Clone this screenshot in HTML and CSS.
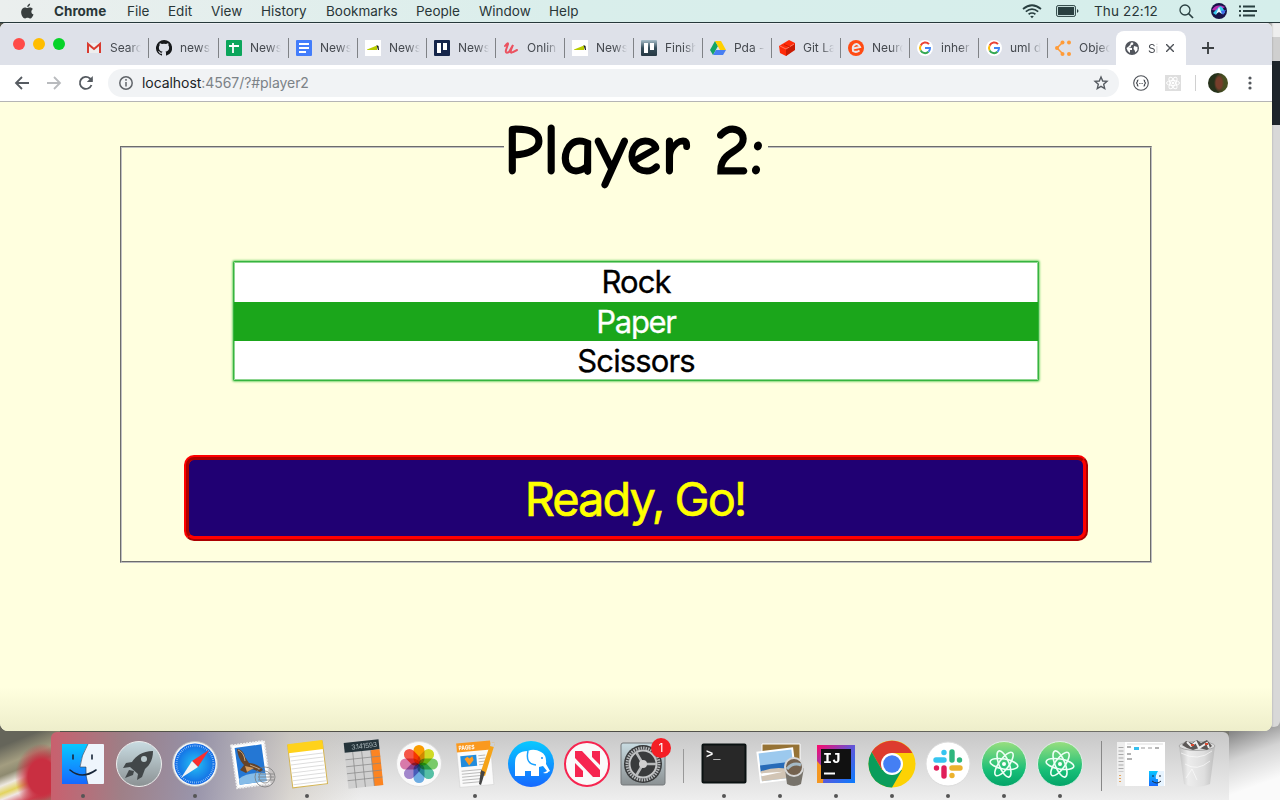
FILE: index.html
```
<!DOCTYPE html>
<html lang="en">
<head>
<meta charset="utf-8">
<title>Player 2</title>
<link rel="stylesheet" href="styles.css">
</head>
<body>
<div class="desktop">
<header class="menubar">
  <nav class="menus">
    <svg class="apple" viewBox="0 0 14 17"><path d="M9.800 0C9.900 2 8.400 3.700 6.700 3.700 6.600 2 8.100.3 9.800 0zM12.900 5.800C10.300 7.600 10.700 10.500 13.500 11.800 12.500 14.500 11.200 16.200 9.700 16 8.500 15.700 8.100 15.300 7 15.300S5.400 15.900 4.400 16C2.100 16-.2 11.700.2 8.500.6 4.600 3.700 3.600 5.500 4.400 6.900 4.900 7.200 4.800 8.500 4.300 10.200 3.700 12 4.400 12.900 5.800z"/></svg>
    <b class="m-chrome">Chrome</b><span class="m-file">File</span><span class="m-edit">Edit</span><span class="m-view">View</span><span class="m-history">History</span><span class="m-bookmarks">Bookmarks</span><span class="m-people">People</span><span class="m-window">Window</span><span>Help</span>
  </nav>
  <div class="status">
    <svg class="wifi" viewBox="0 0 20 15" fill="none" stroke="#293f40" stroke-width="1.700"><path d="M1 5Q10-2.500 19 5M3.800 7.700Q10 2.700 16.200 7.700M6.600 10.300Q10 7.700 13.400 10.300"/><path d="M8.200 12.300Q10 11 11.800 12.300L10 14.300z" fill="#293f40" stroke="none"/></svg>
    <svg class="battery" viewBox="0 0 23 12"><rect x=".6" y=".6" width="18.800" height="10.800" rx="1.500" fill="none" stroke="#293f40"/><rect x="2" y="2" width="16" height="8" fill="#293f40"/><path d="M21 4Q24 6 21 8z" fill="#293f40"/></svg>
    <time>Thu 22:12</time>
    <svg class="search" viewBox="0 0 15 15" fill="none" stroke="#293f40" stroke-width="1.300"><circle cx="6" cy="6" r="5"/><path d="M9.500 9.500L14 14" stroke-width="1.700"/></svg>
    <svg class="siri" viewBox="0 0 16 16"><circle cx="8" cy="8" r="8" fill="#171348"/><path d="M1 7Q5 0 14 4L8 8z" fill="#b52bb2"/><path d="M2 10Q5 7 8 4T14 10L11 11 8 7 5 12z" fill="#36c9ed"/><path d="M8 4L11 11 8 9 5 11z" fill="#e9f5ff"/><path d="M10 8L15 7 12 12z" fill="#4668e9"/></svg>
    <svg class="list" viewBox="0 0 18 12" stroke="#293f40" stroke-width="1.800"><path d="M0 1.500h2M4 1.500h12M0 6h2M4 6h14M0 10.500h2M4 10.500h12"/></svg>
  </div>
</header>
<main class="browser">
  <div class="tabstrip">
    <div class="lights"><i></i><i></i><i></i></div>
    <div class="tabs">
      <div class="tab wide"><svg viewBox="0 0 16 16"><path d="M2 3h12v10H2z" fill="#eee"/><path d="M2 13V4l6 5 6-5v9" fill="none" stroke="#d93b30" stroke-width="2"/></svg><span>Searc</span></div>
      <div class="tab wide"><svg viewBox="0 0 16 16"><path fill="#17191c" d="M8 0a8 8 0 0 0-2.500 15.600c.4.100.5-.2.500-.4v-1.500c-2.200.5-2.700-1-2.700-1-.4-.9-.9-1.200-.9-1.200-.7-.5.100-.5.100-.5.800.1 1.200.8 1.200.8.700 1.300 1.900.9 2.300.7.100-.5.300-.9.500-1.100-1.800-.2-3.600-.9-3.600-4 0-.9.300-1.600.8-2.100-.1-.2-.4-1 .1-2.100 0 0 .7-.2 2.200.8a8 8 0 0 1 4 0c1.500-1 2.200-.8 2.200-.8.500 1.100.2 1.900.1 2.100.5.500.8 1.200.8 2.100 0 3.100-1.800 3.800-3.600 4 .3.300.5.700.5 1.500v2.300c0 .2.200.5.600.4A8 8 0 0 0 8 0z"/></svg><span>news-</span></div>
      <div class="tab wide"><svg viewBox="0 0 16 16"><rect width="16" height="16" rx="1" fill="#0ca65c"/><path d="M3 6h10M7 3v10" stroke="#fff" stroke-width="1.800"/></svg><span>News</span></div>
      <div class="tab"><svg viewBox="0 0 16 16"><rect width="16" height="16" rx="1" fill="#437dfb"/><path d="M3 4h10M3 8h10M3 12h7" stroke="#fff" stroke-width="1.800"/></svg><span>News</span></div>
      <div class="tab"><svg viewBox="0 0 16 16"><path fill="#fff" d="M0 0h16v16H0z"/><path d="M2 9.500L12 5.500v4.500H2z" fill="#b9cc00"/><path d="M11.500 5l2 1 .5 4h-1z" fill="#161c16"/></svg><span>News</span></div>
      <div class="tab"><svg viewBox="0 0 16 16"><rect width="16" height="16" rx="1" fill="#15254a"/><path d="M3 3h4v10H3zM9 3h4v7H9z" fill="#fff"/></svg><span>News</span></div>
      <div class="tab"><svg viewBox="0 0 16 16" fill="none" stroke="#eb5260" stroke-width="2" stroke-linecap="round"><path d="M2 6Q5 2 5 4L3 10Q2 14 6 12L10 5 8 10Q7 14 10 12L14 10"/></svg><span>Onlin</span></div>
      <div class="tab"><svg viewBox="0 0 16 16"><path fill="#fff" d="M0 0h16v16H0z"/><path d="M2 9.500L12 5.500v4.500H2z" fill="#b9cc00"/><path d="M11.500 5l2 1 .5 4h-1z" fill="#161c16"/></svg><span>News</span></div>
      <div class="tab"><svg viewBox="0 0 16 16"><defs><linearGradient id="board" x2="0" y2="1"><stop stop-color="#a9bfcb"/><stop offset=".5" stop-color="#354d5a"/><stop offset="1" stop-color="#263843"/></linearGradient></defs><rect width="16" height="16" rx="1" fill="url(#board)"/><path d="M3 3h4v10H3zM9 3h4v7H9z" fill="#fff"/></svg><span>Finish</span></div>
      <div class="tab"><svg viewBox="0 0 16 16"><path d="M5 1L0 10l3 5L8 6z" fill="#13a464"/><path d="M5 1h6l5 9h-6z" fill="#ffd000"/><path d="M6 10h10l-3 5H3z" fill="#477ff2"/></svg><span>Pda -</span></div>
      <div class="tab"><svg viewBox="0 0 16 16"><path d="M0 6L10 0l6 3v6L7 16 1 13z" fill="#ff2b09"/><path d="M7 9l9-5v6l-9 6z" fill="#c91b03"/><path d="M1 6l6 3 8-5" fill="none" stroke="#ff8d76" stroke-width=".8"/><path d="M5 4.500l6 2.500" fill="none" stroke="#c91b03"/></svg><span>Git La</span></div>
      <div class="tab"><svg viewBox="0 0 16 16"><circle cx="8" cy="8" r="8" fill="#ff4b13"/><path d="M5 8.500L12 7Q10 3 7 4.500T5 11Q8 13 11.500 10.500" fill="none" stroke="#e9e6ea" stroke-width="2"/></svg><span>Neuro</span></div>
      <div class="tab"><svg viewBox="0 0 16 16"><circle cx="8" cy="8" r="8" fill="#fff"/><g fill="none" stroke-width="2"><path d="M12 4.200A5 5 0 0 0 3.700 5.500" stroke="#ea4335"/><path d="M3.700 5.500a5 5 0 0 0 0 5" stroke="#fbbc05"/><path d="M3.700 10.500a5 5 0 0 0 7.800 1.300" stroke="#34a853"/><path d="M11.500 11.800A5 5 0 0 0 13 8H8" stroke="#4285f4"/></g></svg><span>inher</span></div>
      <div class="tab"><svg viewBox="0 0 16 16"><circle cx="8" cy="8" r="8" fill="#fff"/><g fill="none" stroke-width="2"><path d="M12 4.200A5 5 0 0 0 3.700 5.500" stroke="#ea4335"/><path d="M3.700 5.500a5 5 0 0 0 0 5" stroke="#fbbc05"/><path d="M3.700 10.500a5 5 0 0 0 7.800 1.300" stroke="#34a853"/><path d="M11.500 11.800A5 5 0 0 0 13 8H8" stroke="#4285f4"/></g></svg><span>uml d</span></div>
      <div class="tab last"><svg viewBox="0 0 16 16" fill="#ff9b38"><path d="M7 3L2 8l5 5" fill="none" stroke="#ff9b38" stroke-width="1.500"/><circle cx="7.500" cy="2.500" r="2"/><circle cx="2" cy="8" r="2"/><circle cx="7.500" cy="14" r="2"/><circle cx="14" cy="2.500" r="2"/><circle cx="14" cy="14" r="2"/></svg><span>Objec</span></div>
    </div>
    <div class="tab active"><svg viewBox="0 0 16 16"><circle cx="8" cy="8" r="7" fill="#51555c"/><path d="M7 2.500h2q1 2-1 2.500T7 7L4.500 7.500 8 8 8 10 6 10 6 13Q3 11 2.500 8L4 7Q5 6 6 5zM10 6l3.500 1v3l-2 2.500-1-2.500-1-1z" fill="#fff"/></svg><span>Si</span><svg class="close" viewBox="0 0 8 8"><path d="M0 0l8 8M8 0L0 8" stroke="#4d5157" stroke-width="1.400"/></svg></div>
    <svg class="plus" viewBox="0 0 12 12"><path d="M6 0v12M0 6h12" stroke="#3c4043" stroke-width="1.900"/></svg>
  </div>
  <div class="toolbar">
    <svg class="nav-icon" viewBox="0 0 16 16" fill="none" stroke="#565b61" stroke-width="1.800"><path d="M15 8H2M8 2L2 8l6 6"/></svg>
    <svg class="nav-icon" viewBox="0 0 16 16" fill="none" stroke="#b9bbbe" stroke-width="1.800"><path d="M1 8h13M8 2l6 6-6 6"/></svg>
    <svg class="nav-icon" viewBox="0 0 16 16"><path d="M13.500 10A6 6 0 1 1 12 3.500L14 5.500" fill="none" stroke="#565b61" stroke-width="1.800"/><path d="M14.800 1v6H8.800z" fill="#565b61"/></svg>
    <div class="address">
      <svg class="info" viewBox="0 0 16 16" fill="none" stroke="#606469" stroke-width="1.500"><circle cx="8" cy="8" r="6.200"/><path d="M8 7v4.500M8 4v1.700"/></svg>
      <span class="url"><span class="host">localhost</span>:4567/?#player2</span>
      <svg class="star" viewBox="0 0 16 16"><path d="M8 2l1.700 4 4.300.4-3.300 2.900 1 4.200L8 11.300l-3.700 2.200 1-4.200L2 6.400 6.300 6z" fill="none" stroke="#565b61" stroke-width="1.400"/></svg>
    </div>
    <svg class="ext" viewBox="0 0 16 16" fill="none" stroke="#4d5157" stroke-width="1.100"><circle cx="8" cy="8" r="7.300"/><path d="M5.500 5Q4 5 4.500 6.500L3.500 8l1 1.500Q4 11 5.500 11M10.500 5q1.500 0 1 1.500l1 1.500-1 1.500q.5 1.500-1 1.500" stroke-width="1.200"/><path d="M6.300 8.500h3.600" stroke-dasharray=".8 .5"/></svg>
    <svg class="ext react" viewBox="0 0 16 16"><path fill="#dedede" d="M0 0h16v16H0z"/><g fill="none" stroke="#fff"><ellipse cx="8" cy="8" rx="6.500" ry="2.500"/><ellipse cx="8" cy="8" rx="6.500" ry="2.500" transform="rotate(60 8 8)"/><ellipse cx="8" cy="8" rx="6.500" ry="2.500" transform="rotate(120 8 8)"/></g><circle cx="8" cy="8" r="1.300" fill="#fff"/></svg>
    <i class="rule"></i>
    <i class="avatar"></i>
    <svg class="more" viewBox="0 0 4 14" fill="#53575c"><circle cx="2" cy="2" r="1.600"/><circle cx="2" cy="7" r="1.600"/><circle cx="2" cy="12" r="1.600"/></svg>
  </div>
  <section class="page">
    <fieldset class="game">
      <legend>Player 2:</legend>
      <div class="choices" role="listbox"><div>Rock</div><div class="selected">Paper</div><div>Scissors</div></div>
      <button class="go">Ready, Go!</button>
    </fieldset>
  </section>
</main>
<aside class="behind"></aside>
<footer class="dock">
  <svg class="defs" width="0" height="0"><defs>
    <linearGradient id="blue" x2="0" y2="1"><stop stop-color="#08c9ff"/><stop offset="1" stop-color="#1668ff"/></linearGradient>
    <linearGradient id="metal" x2="0" y2="1"><stop stop-color="#c9dce2"/><stop offset="1" stop-color="#8b9193"/></linearGradient>
    <linearGradient id="green" x2="0" y2="1"><stop stop-color="#99df7f"/><stop offset=".65" stop-color="#17be77"/><stop offset="1" stop-color="#03a368"/></linearGradient>
    <radialGradient id="safari"><stop stop-color="#25c3f4"/><stop offset="1" stop-color="#1268e4"/></radialGradient>
    <linearGradient id="idea" x2="1" y2="1"><stop stop-color="#ff096a"/><stop offset=".5" stop-color="#6056d8"/><stop offset="1" stop-color="#087cff"/></linearGradient>
    <linearGradient id="bin" x2="1"><stop stop-color="#bbb"/><stop offset=".25" stop-color="#eee"/><stop offset=".7" stop-color="#dedede"/><stop offset="1" stop-color="#b9b9b9"/></linearGradient>
  </defs></svg>
  <div class="app open"><svg viewBox="0 0 56 60"><rect x="7" y="8" width="42" height="40" rx="1" fill="#eef5fc"/><path d="M7 8h26Q26 20 25 31h6Q31 42 33 48H7z" fill="url(#blue)"/><path d="M33 8Q26 20 25 31h6Q30 40 33 48" fill="none" stroke="#2b3d50" stroke-width=".6"/><path d="M18 19v4M37 19v4M15 34Q27 44 41 34" fill="none" stroke="#172638" stroke-width="1.600" stroke-linecap="round"/></svg></div>
  <div class="app"><svg viewBox="0 0 56 60"><circle cx="28" cy="28" r="22.500" fill="url(#metal)" stroke="#eee"/><path d="M42 15C31 15 25 20 21 26L15 27 12 32 19 31 27 38 26 44 31 41 34 33C40 28 42 22 42 15zM18 34L14 42 22 39 23 35z" fill="#424749"/><circle cx="33" cy="23" r="3" fill="#b9c8cc"/></svg></div>
  <div class="app open"><svg viewBox="0 0 56 60"><circle cx="28" cy="28" r="22.500" fill="#f7f7f7" stroke="#bbb"/><circle cx="28" cy="28" r="20.500" fill="url(#safari)"/><circle cx="28" cy="28" r="18.500" fill="none" stroke="#b6ddff" stroke-width="2" stroke-dasharray=".6 1.340"/><path d="M42 14L31 31 25 25z" fill="#fa2e2f"/><path d="M14 42L25 25 31 31z" fill="#f4f4f4"/></svg></div>
  <div class="app"><svg viewBox="0 0 56 60"><g transform="rotate(-8 28 28)"><rect x="11" y="7" width="33" height="43" fill="#fff" stroke="#eee" stroke-width="2" stroke-dasharray="2 1"/><rect x="14" y="10" width="27" height="37" fill="#2477d4"/><path d="M14 41Q24 35 41 39v8H14z" fill="#86bce8"/></g><path d="M14 13Q20 13 22 21L26 27Q36 28 40 34L37 36 29 33 23 37 17 34 21 29Q15 23 14 13z" fill="#654328"/><path d="M15 14Q21 16 22 25M27 29l10 4" fill="none" stroke="#c8a67e"/><path d="M22 30l9 2-7 4z" fill="#d59b5c"/><g fill="none" stroke="#777" opacity=".75"><circle cx="42" cy="41" r="10"/><circle cx="42" cy="41" r="6"/><path d="M35 38h16M35 41h16M35 44h16"/></g></svg></div>
  <div class="app open"><svg viewBox="0 0 56 60"><g transform="rotate(-7 28 28)"><path d="M11 7h35v43H11z" fill="#fff" stroke="#d4b453"/><path d="M11 6h35v9H11z" fill="#ffd21b"/><path d="M12 19h33M12 23h33M12 27h33M12 31h33M12 35h33M12 39h33M12 43h33M12 47h33" stroke="#ddd"/></g></svg></div>
  <div class="app"><svg viewBox="0 0 56 60"><g transform="rotate(-6 28 28)"><path d="M11 6h35v45H11z" fill="#d0d0d0"/><path d="M11 5h35v10H11z" fill="#25343a"/><path d="M37 15h9v36h-9z" fill="#fc8421"/><path d="M11 22h35M11 29h35M11 36h35M11 43h35M19 15v36M28 15v36M37 15v36" stroke="#888" stroke-width=".7"/><text x="18" y="12.500" font-size="7" fill="#a5b2b5" textLength="26">3.141593</text></g></svg></div>
  <div class="app"><svg viewBox="0 0 56 60"><circle cx="28" cy="28" r="22.500" fill="#fafafa" stroke="#ddd"/><g class="petals"><rect x="22.500" y="9" width="11" height="19" rx="5.500" fill="#ffa000"/><rect x="22.500" y="9" width="11" height="19" rx="5.500" fill="#d5df25" transform="rotate(45 28 28)"/><rect x="22.500" y="9" width="11" height="19" rx="5.500" fill="#7cce6c" transform="rotate(90 28 28)"/><rect x="22.500" y="9" width="11" height="19" rx="5.500" fill="#58c4a8" transform="rotate(135 28 28)"/><rect x="22.500" y="9" width="11" height="19" rx="5.500" fill="#6fb0e7" transform="rotate(180 28 28)"/><rect x="22.500" y="9" width="11" height="19" rx="5.500" fill="#a58ad0" transform="rotate(225 28 28)"/><rect x="22.500" y="9" width="11" height="19" rx="5.500" fill="#dd7cae" transform="rotate(270 28 28)"/><rect x="22.500" y="9" width="11" height="19" rx="5.500" fill="#fa5849" transform="rotate(315 28 28)"/></g></svg></div>
  <div class="app open"><svg viewBox="0 0 56 60"><g transform="rotate(-5 28 28)"><path d="M11 7h34v43H11z" fill="#fafafa" stroke="#ccc" stroke-width=".5"/><path d="M11 6h34v9H11z" fill="#fa991e"/><text x="13" y="13" font-size="6" font-weight="bold" fill="#fff" textLength="16" lengthAdjust="spacingAndGlyphs">PAGES</text><path d="M14 19h16v11H14z" fill="#218cdd"/><path d="M18 22l3-2 2 2 3-2 1 4-5 5z" fill="#ff9b20"/><path d="M32 20h7M32 23h7M32 26h7M32 29h5M14 34h22M14 37h21M14 40h21M14 43h20M14 46h17" stroke="#bbb"/></g><path d="M44 6l4 1-10 33-5-2z" fill="#f5a318"/><path d="M34 34l4 2-4 13-2-1z" fill="#444"/><path d="M44 6l4 1-1 4-4-1z" fill="#cdd1d7"/></svg></div>
  <div class="app"><svg viewBox="0 0 56 60"><circle cx="28" cy="28" r="23" fill="url(#blue)"/><path d="M12 40V27Q12 15 25 15Q31 12 38 16Q44 19 43 28L47 35 45 36Q45 38 40 37L44 35 40 30 36 31V40H28V35H22V40z" fill="#fff"/><path d="M25 15Q22 28 33 29" fill="none" stroke="#1aa2ff" stroke-width="1.500"/><circle cx="39" cy="22" r="1" fill="#178ef5"/></svg></div>
  <div class="app"><svg viewBox="0 0 56 60"><circle cx="28" cy="28" r="22" fill="#fafafa" stroke="#f62550" stroke-width="2"/><path d="M16 15h7L41 34v7h-7L16 22zM33 15h8v14l-8-8zM16 27l8 8v6h-8z" fill="#f62550"/></svg></div>
  <div class="app"><svg viewBox="0 0 56 60"><rect x="6" y="7" width="44" height="42" rx="2" fill="url(#metal)" stroke="#74787b"/><circle cx="28" cy="28" r="19" fill="#393b3c"/><circle cx="28" cy="28" r="16" fill="none" stroke="#b4b7b9" stroke-width="3" stroke-dasharray="1.500 1"/><circle cx="28" cy="28" r="13.500" fill="none" stroke="#c3c5c6" stroke-width="2"/><path d="M41 28H28M28 28l-7-12M28 28l-7 12" stroke="#b8babb" stroke-width="2.500"/><circle cx="28" cy="28" r="4" fill="#d0d0d0"/><circle cx="46" cy="12" r="10" fill="#f51e25"/><text x="46" y="16" text-anchor="middle" font-size="12" fill="#fff">1</text></svg></div>
  <i class="divider"></i>
  <div class="app open"><svg viewBox="0 0 56 60"><rect x="6.500" y="8.500" width="43" height="38" rx="1" fill="#282828" stroke="#0b1212" stroke-width="2"/><text class="prompt" x="10" y="22" font-size="12" font-weight="bold" fill="#fff">&gt;_</text></svg></div>
  <div class="app open"><svg viewBox="0 0 56 60"><path d="M10 8h38v34H10z" fill="#967335" stroke="#fff"/><g transform="rotate(-7 28 28)"><path d="M6 13h37v32H6z" fill="#fff"/><path d="M8 15h33v28H8z" fill="#9cc9ee"/><path d="M8 27h33v7H8z" fill="#276bb8"/><path d="M8 33Q25 29 41 36v7H8z" fill="#d2c5b5"/><path d="M8 35l22 1-22 2z" fill="#fff"/></g><path d="M33 33l2 15q7 4 14 0l3-16z" fill="#77736b"/><circle cx="42" cy="31" r="9" fill="#74624f" stroke="#d7d7d7" stroke-width="2"/><path d="M35 33q6-7 14-4" stroke="#a5bac7" stroke-width="3" fill="none"/></svg></div>
  <div class="app open"><svg viewBox="0 0 56 60"><path d="M9 9h38v38H9z" fill="url(#idea)"/><path d="M9 25l7 8-1 14H9z" fill="#f49722"/><path d="M13 13h30v30H13z" fill="#111"/><text class="ij" x="15" y="27" font-size="15" font-weight="bold" fill="#fff">IJ</text><path d="M16 37.500h11" stroke="#fff" stroke-width="2"/></svg></div>
  <div class="app open"><svg viewBox="0 0 56 60"><circle cx="28" cy="28" r="23.500" fill="#fdd204"/><path d="M7.700 16A23.500 23.500 0 0 1 48.300 17H28L18 34z" fill="#dd3b2e"/><path d="M7.700 16A23.500 23.500 0 0 0 28 51.500L38 34 18 34z" fill="#0b9d5b"/><circle cx="28" cy="28" r="11" fill="#fff"/><circle cx="28" cy="28" r="8.800" fill="#447ff4"/></svg></div>
  <div class="app open"><svg viewBox="0 0 56 60"><circle cx="28" cy="28" r="22" fill="#fff" stroke="#ddd"/><g fill="none" stroke-width="5.400" stroke-linecap="round"><path d="M16 24h8M24 16.500v.1" stroke="#36c5f0"/><path d="M32 16v8M39.500 24v.1" stroke="#2eb67d"/><path d="M32 32h8M32 39.500v.1" stroke="#ecb22e"/><path d="M24 32v8M16.500 32v.1" stroke="#e01e5a"/></g></svg></div>
  <div class="app open"><svg viewBox="0 0 56 60"><circle cx="28" cy="28" r="22.500" fill="url(#green)" stroke="#e1eee7"/><g fill="none" stroke="#edfff5" stroke-width="1.600"><ellipse cx="28" cy="28" rx="14" ry="5" transform="rotate(10 28 28)"/><ellipse cx="28" cy="28" rx="14" ry="5" transform="rotate(68 28 28)"/><ellipse cx="28" cy="28" rx="14" ry="5" transform="rotate(126 28 28)"/></g><circle cx="28" cy="28" r="2" fill="#fff"/></svg></div>
  <div class="app open"><svg viewBox="0 0 56 60"><circle cx="28" cy="28" r="22.500" fill="url(#green)" stroke="#e1eee7"/><g fill="none" stroke="#edfff5" stroke-width="1.600"><ellipse cx="28" cy="28" rx="14" ry="5" transform="rotate(10 28 28)"/><ellipse cx="28" cy="28" rx="14" ry="5" transform="rotate(68 28 28)"/><ellipse cx="28" cy="28" rx="14" ry="5" transform="rotate(126 28 28)"/></g><circle cx="28" cy="28" r="2" fill="#fff"/></svg></div>
  <i class="divider tall"></i>
  <div class="app"><svg viewBox="0 0 56 60"><path d="M4 6h48v44H4z" fill="#fff"/><path d="M4 6h8v44H4z" fill="#eee"/><path d="M8 11v25" stroke="#aaa" stroke-width="5" stroke-dasharray="1 2.500"/><path d="M7 39v9" stroke="#e5a45b" stroke-width="2" stroke-dasharray="1 2"/><path d="M14 8h36" stroke="#ddd"/><path d="M14 11h4M42 12h4M14 18h4M14 23h5" stroke="#999" stroke-width="1.500"/><path d="M28 12h4M35 12h4" stroke="#ccc" stroke-width="2"/><path d="M21 11h5v3h-5z" fill="#35bfee"/><path d="M36 35h15v15H36z" fill="#e7f4ff"/><path d="M36 35h9q-3 5-2 8h2v7h-9z" fill="url(#blue)"/><path d="M39 45q5 4 9 0M40 39v2M47 39v2" fill="none" stroke="#1a293b"/></svg></div>
  <div class="app"><svg viewBox="0 0 56 60"><path d="M10 10l5 38q13 6 26 0l5-38z" fill="url(#bin)" opacity=".9"/><ellipse cx="28" cy="10" rx="18" ry="4.500" fill="#ddd" stroke="#aaa"/><path d="M13 9l4-4 6 2 5-3 4 3 6-3 5 6-5 4-8-2-6 2-6-2z" fill="#5b5756"/><path d="M18 6l4 4 5-4 3 6 8-5 2 5" fill="none" stroke="#eee" stroke-width="2"/><path d="M22 9h3M36 8h3" stroke="#dc4a31" stroke-width="2"/><path d="M12 17q17 9 31-2M16 28q12 8 25-3M17 42l6-9 5 11" fill="none" stroke="#fff" opacity=".6"/></svg></div>
</footer>
</div>
</body>
</html>
```

FILE: styles.css
```
* { box-sizing: border-box; }
body { margin: 0; font-family: Inter, "Liberation Sans", sans-serif; }
svg { display: block; flex: none; }
.desktop {
  position: relative; width: 1280px; height: 800px; overflow: hidden;
  display: flex; flex-direction: column;
  background: linear-gradient(90deg, #55544b 0, #4c4c45 600px, #77776f 1228px, #aaa 1280px);
}
.desktop::before {
  content: ""; position: absolute; left: 0; bottom: 0; width: 60px; height: 75px;
  background: radial-gradient(ellipse at 42px 52px, #c92f41 0 14px, transparent 27px), linear-gradient(158deg, #65655a 0 22%, #a39d80 42%, #8e8a70 52%, #eee9e0 62%, #e3d45f 70%, #f0e7e4 76%, #cf4856 87%, #87967b 94%);
}
.desktop::after {
  content: ""; position: absolute; left: 1229px; bottom: 0; width: 51px; height: 73px;
  background: linear-gradient(160deg, #777 0, #d4d4d4 38%, #fafafa 75%);
}
.menubar {
  height: 23px; flex: none; display: flex; justify-content: space-between;
  border-bottom: 1px solid #26383a; color: #293638; font-size: 13.500px; line-height: 22px;
  background: linear-gradient(90deg, #ebefee 0, #d9eeeb 45%, #d5eeeb 100%);
}
.menus, .status { display: flex; align-items: center; white-space: nowrap; }
.menus { padding-left: 21px; }
.menus > * { flex: none; }
.apple { width: 13px; height: 17px; margin-right: 20px; fill: #393f3f; }
.m-chrome { width: 73px; }
.m-file { width: 41px; }
.m-edit { width: 43px; }
.m-view { width: 50px; }
.m-history { width: 65px; }
.m-bookmarks { width: 90px; }
.m-people { width: 63px; }
.m-window { width: 70px; }
.status { padding-right: 23px; }
.wifi { width: 20px; height: 15px; margin-right: 14px; }
.battery { width: 23px; height: 12px; margin-right: 15px; }
.status time { width: 85px; letter-spacing: .15px; }
.search { width: 15px; height: 15px; margin-right: 17px; }
.siri { width: 16px; height: 16px; margin-right: 12px; }
.list { width: 18px; height: 12px; }
.browser {
  position: relative; z-index: 3; width: 1272px; height: 708px; flex: none; overflow: hidden;
  border-radius: 6px 6px 8px 8px; background: #ffffdf; display: flex; flex-direction: column;
}
.tabstrip { height: 42px; flex: none; display: flex; background: #dee1e9; box-shadow: inset 0 1px #eceef2; }
.lights { width: 79px; padding: 15px 0 0 13px; display: flex; gap: 8px; }
.lights i { width: 12px; height: 12px; border-radius: 50%; background: #ff4b48; }
.lights i:nth-child(2) { background: #ffbd00; }
.lights i:nth-child(3) { background: #06d328; }
.tabs { width: 1037px; display: flex; }
.tab {
  flex: 0 0 69px; display: flex; align-items: center; gap: 8px; padding: 7px 0 0 7px;
  font-size: 12px; color: #45494f; white-space: nowrap;
  background: linear-gradient(#7f8286, #7f8286) right 15px / 1px 20px no-repeat;
}
.tab.wide { flex-basis: 70px; }
.tab.last { flex-basis: 68px; background: none; }
.tab > svg { width: 16px; height: 16px; }
.tab span { width: 31px; flex: none; -webkit-mask-image: linear-gradient(90deg, #000 60%, transparent); mask-image: linear-gradient(90deg, #000 60%, transparent); }
.tab.active { flex: 0 0 70px; height: 34px; margin-top: 8px; padding: 0 8px; border-radius: 8px 8px 0 0; background: #fff; }
.tab.active span { width: 10px; }
.tab.active .close { width: 8px; height: 8px; }
.plus { width: 12px; height: 12px; margin: 19px 0 0 16px; }
.toolbar { height: 37px; flex: none; display: flex; align-items: center; padding: 0 20px 1px 14px; background: #fff; border-bottom: 1px solid #b5b5b5; }
.nav-icon { width: 16px; height: 16px; margin-right: 16px; }
.address { width: 1011px; height: 28px; margin-left: -2px; display: flex; align-items: center; padding: 0 10px; border-radius: 14px; background: #f1f3f5; }
.info { width: 16px; height: 16px; margin-right: 8px; }
.url { flex: 1; font-size: 14px; letter-spacing: -.060px; color: #7c8287; }
.host { color: #202326; }
.star { width: 16px; height: 16px; }
.ext { width: 16px; height: 16px; margin-left: 14px; }
.ext.react { margin-left: 16px; }
.rule { width: 1px; height: 16px; background: #d0d0d0; margin-left: 14px; }
.avatar { width: 20px; height: 20px; border-radius: 50%; margin-left: 12px; background: radial-gradient(ellipse 5px 9px at 11px 10px, #763e2b 0 60%, transparent), linear-gradient(90deg, #26321b 0 45%, #484f22 75%); }
.more { width: 4px; height: 14px; margin-left: auto; }
.page { flex: 1; padding: 1px 120px 0; background: linear-gradient(#ffffdf 0 585px, #eeeecb 100%); }
.game { height: 460px; margin: 0; padding: 71px 62px 0; border: 2px groove #c0c0c0; }
.game legend {
  width: 264px; height: 88px; margin: 0 auto; padding: 0 3px 0 0; text-align: center; white-space: nowrap;
  font: 68px/96px "Comic Sans MS", "Comic Neue", Lato, sans-serif; -webkit-text-stroke: 2.800px #000; letter-spacing: 1.200px;
}
.choices { width: 804px; height: 118px; margin: 0 auto; background: #fff; border-radius: 1px; box-shadow: 0 0 0 1px #36b440, 0 0 2px 2px #84d878, inset 0 0 0 1px #8ed58f; font-size: 31px; text-align: center; letter-spacing: -.9px; -webkit-text-stroke: .3px; }
.choices div { height: 39.500px; line-height: 40px; }
.choices .selected { background: #1ba61b; color: #fff; letter-spacing: -1.300px; }
.go { display: block; width: 904px; height: 86px; margin-top: 75px; padding: 1px 2px 0 0; border: 5px ridge #f00; border-radius: 10px; background: #200073; color: #ff0; font: 47px Inter, "Liberation Sans", sans-serif; letter-spacing: -2px; -webkit-text-stroke: .6px; }
.behind { position: absolute; z-index: 1; left: 1270px; top: 23px; width: 10px; height: 704px; border-radius: 0 0 6px; background: linear-gradient(#eee 0 14px, #cfcfcf 14px 38px, #1e252b 38px 102px, #d8d8d8 102px); box-shadow: inset 3px 0 2px -1px rgba(0,0,0,.3); }
.dock { position: relative; z-index: 2; flex: none; width: 1178px; height: 68px; margin: 1px 0 0 51px; padding: 4px 4px 0; display: flex; border-radius: 6px 6px 0 0; background: linear-gradient(90deg, #c9606e 0, rgba(155,122,130,.95) 70px, rgba(139,134,160,.85) 145px, rgba(170,165,174,.7) 200px, rgba(201,194,183,.5) 240px, transparent 310px), linear-gradient(#c8c8c8, #eee); }
.defs { position: absolute; }
.app { position: relative; width: 56px; height: 60px; flex: none; }
.app > svg { width: 56px; height: 60px; }
.open::after { content: ""; position: absolute; left: 26px; top: 58px; width: 4px; height: 4px; border-radius: 50%; background: #555; }
.prompt, .ij { font-family: "Liberation Mono", monospace; }
.petals rect { mix-blend-mode: multiply; }
.divider { flex: none; width: 25px; height: 60px; background: linear-gradient(#999, #999) 12px 13px / 1px 34px no-repeat; }
.divider.tall { background: linear-gradient(#888, #888) 13px 5px / 1px 50px no-repeat; }
```
